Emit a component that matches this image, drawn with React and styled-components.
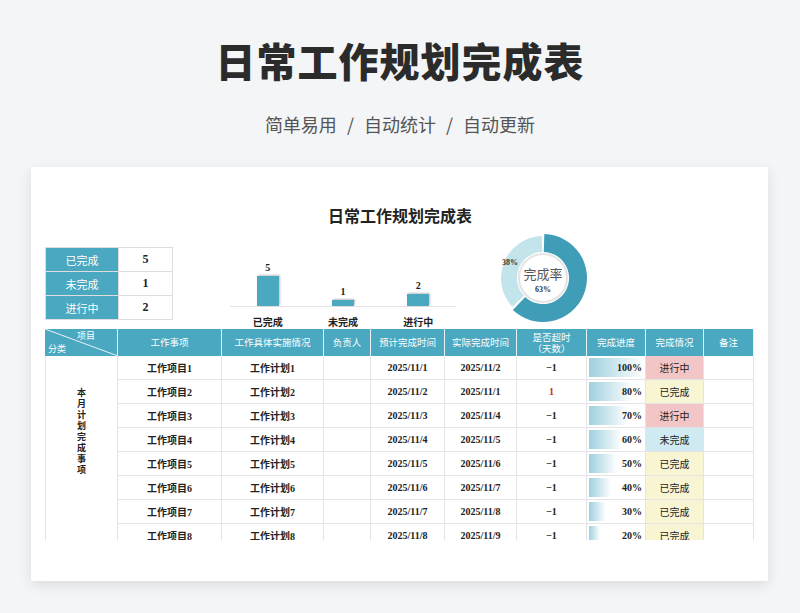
import React from 'react';
import styled, { createGlobalStyle } from 'styled-components';

const TEAL = '#4aa8c0';

const Global = createGlobalStyle`
  html, body { margin: 0; padding: 0; background: #f3f5f7; }
  body { font-family: "Noto Sans CJK SC", "Noto Sans", sans-serif; }
`;

const Page = styled.div`
  width: 800px;
  height: 613px;
  overflow: hidden;
  display: flex;
  flex-direction: column;
  align-items: center;
`;

const Heading = styled.h1`
  margin: 32px 0 0;
  font-size: 40px;
  line-height: 56px;
  font-weight: 900;
  color: #2b2b2b;
  letter-spacing: 1px;
`;

const Sub = styled.div`
  margin-top: 23px;
  font-size: 18px;
  color: #555;
  word-spacing: 6px;
`;

const Card = styled.div`
  margin-top: 30px;
  width: 737px;
  height: 414px;
  margin-left: -1px;
  background: #fff;
  box-shadow: 0 4px 12px rgba(0,0,0,0.1);
  padding: 0 13px 0 14px;
  box-sizing: border-box;
  font-family: "Liberation Serif", "Noto Sans CJK SC", serif;
  color: #222;
`;

const SheetTitle = styled.div`
  text-align: center;
  font-family: "Noto Sans CJK SC", sans-serif;
  font-size: 16px;
  font-weight: 700;
  margin-top: 36px;
  height: 22px;
`;

const Top = styled.div`
  display: flex;
  align-items: flex-start;
  margin-top: 22px;
  height: 82px;
`;

const Summary = styled.div`
  display: grid;
  grid-template-columns: 72px 53px;
  gap: 1px;
  background: #ddd;
  padding: 1px;
  align-self: flex-start;
`;

const SumLabel = styled.div`
  background: ${TEAL};
  color: #fff;
  font-family: "Noto Sans CJK SC", sans-serif;
  font-size: 11px;
  height: 23px;
  display: flex; align-items: center; justify-content: center;
`;

const SumVal = styled.div`
  background: #fff;
  font-size: 12px;
  font-weight: 700;
  display: flex; align-items: center; justify-content: center;
`;

const Chart = styled.div`
  margin-left: 57px;
  width: 226px;
  height: 82px;
  display: grid;
  grid-template-columns: repeat(3, 1fr);
  grid-template-rows: 60px 22px;
`;

const BarCol = styled.div`
  display: flex;
  flex-direction: column;
  align-items: center;
  justify-content: flex-end;
  border-bottom: 1px solid #e3e3e3;
  font-size: 10px;
  font-weight: 700;
`;

const Bar = styled.div`
  width: 22px;
  height: ${p => p.h}px;
  background: ${TEAL};
  margin-top: 3px;
  box-shadow: 1px -1px 2px rgba(0,0,0,0.25);
`;

const BarLabel = styled.div`
  text-align: center;
  font-family: "Noto Sans CJK SC", sans-serif;
  font-size: 10px;
  font-weight: 700;
  padding-top: 7px;
`;

const Donut = styled.div`
  margin-left: 42px;
  margin-top: -14px;
  width: 90px;
  height: 90px;
`;

const Table = styled.div`
  height: 211px;
  overflow: hidden;
  display: grid;
  grid-template-columns: 73px 104px 102px 47px 74px 72px 70px 59px 58px 50px;
  grid-template-rows: 27px;
  grid-auto-rows: 24px;
  font-size: 10px;
  font-weight: 700;
`;

const Th = styled.div`
  background: ${TEAL};
  color: #fff;
  border-right: 1px solid #e8f3f6;
  display: flex; flex-direction: column; align-items: center; justify-content: center;
  font-weight: 400;
  font-size: 9.5px;
  line-height: 11px;
  font-family: "Noto Sans CJK SC", sans-serif;
  position: relative;
  overflow: hidden;
`;

const Corner = styled(Th)`
  display: block;
  & span { position: absolute; font-size: 9px; }
`;

const Td = styled.div`
  border-right: 1px solid #e4e4e4;
  border-bottom: 1px solid #e4e4e4;
  display: flex; align-items: center; justify-content: center;
  color: ${p => (p.red ? '#d22' : '#222')};
  background: ${p => p.bg || '#fff'};
  position: relative;
`;

const Category = styled(Td)`
  grid-row: span 8;
  border-left: 1px solid #e4e4e4;
  writing-mode: vertical-rl;
  font-family: "Noto Sans CJK SC", sans-serif;
  font-size: 9px;
  letter-spacing: 2px;
  padding-bottom: 40px;
`;

const Progress = styled(Td)`
  justify-content: flex-end;
  padding-right: 3px;
  & > span { position: relative; }
`;

const Fill = styled.div`
  position: absolute;
  left: 2px; top: 2px; bottom: 2px;
  background: linear-gradient(90deg, #9fd0df, #ffffff);
`;

const Status = styled(Td)`
  font-family: "Noto Sans CJK SC", sans-serif;
  font-weight: 400;
`;

const statusBg = { 进行中: '#f2c6c6', 已完成: '#f8f5d3', 未完成: '#cfeaf0' };

const rows = [
  ['2025/11/1', '2025/11/2', -1, 100, '进行中'],
  ['2025/11/2', '2025/11/1', 1, 80, '已完成'],
  ['2025/11/3', '2025/11/4', -1, 70, '进行中'],
  ['2025/11/4', '2025/11/5', -1, 60, '未完成'],
  ['2025/11/5', '2025/11/6', -1, 50, '已完成'],
  ['2025/11/6', '2025/11/7', -1, 40, '已完成'],
  ['2025/11/7', '2025/11/8', -1, 30, '已完成'],
  ['2025/11/8', '2025/11/9', -1, 20, '已完成'],
];

const arc = (cx, cy, r0, r1, a0, a1) => {
  const p = (r, a) => [cx + r * Math.sin(a), cy - r * Math.cos(a)];
  const large = a1 - a0 > Math.PI ? 1 : 0;
  const [x1, y1] = p(r1, a0), [x2, y2] = p(r1, a1), [x3, y3] = p(r0, a1), [x4, y4] = p(r0, a0);
  return `M${x1} ${y1}A${r1} ${r1} 0 ${large} 1 ${x2} ${y2}L${x3} ${y3}A${r0} ${r0} 0 ${large} 0 ${x4} ${y4}Z`;
};

const DonutChart = () => {
  const split = 0.625 * Math.PI * 2;
  return (
    <svg width="90" height="90" viewBox="0 0 90 90">
      <path d={arc(45, 45, 26, 44, 0.03, split - 0.03)} fill="#3f9db8" />
      <path d={arc(45, 45, 26, 42, split + 0.03, Math.PI * 2 - 0.03)} fill="#c3e4ea" />
      <circle cx="45" cy="45" r="24" fill="#fff" stroke="#e4e4e4" strokeWidth="2" />
      <text x="45" y="46" textAnchor="middle" fontSize="13" fill="#555" fontFamily="Noto Sans CJK SC">完成率</text>
      <text x="45" y="59" textAnchor="middle" fontSize="8" fontWeight="700" fill="#333">63%</text>
      <text x="12" y="32" textAnchor="middle" fontSize="8" fontWeight="700" fill="#333">38%</text>
    </svg>
  );
};

export default function App() {
  return (
    <Page>
      <Global />
      <Heading>日常工作规划完成表</Heading>
      <Sub>简单易用 / 自动统计 / 自动更新</Sub>
      <Card>
        <SheetTitle>日常工作规划完成表</SheetTitle>
        <Top>
          <Summary>
            <SumLabel>已完成</SumLabel><SumVal>5</SumVal>
            <SumLabel>未完成</SumLabel><SumVal>1</SumVal>
            <SumLabel>进行中</SumLabel><SumVal>2</SumVal>
          </Summary>
          <Chart>
            <BarCol>5<Bar h={30} /></BarCol>
            <BarCol>1<Bar h={6} /></BarCol>
            <BarCol>2<Bar h={12} /></BarCol>
            <BarLabel>已完成</BarLabel>
            <BarLabel>未完成</BarLabel>
            <BarLabel>进行中</BarLabel>
          </Chart>
          <Donut><DonutChart /></Donut>
        </Top>
        <Table>
          <Corner>
            <svg width="73" height="27" style={{ position: 'absolute', left: 0, top: 0 }}>
              <line x1="0" y1="0" x2="73" y2="27" stroke="#e8f3f6" strokeWidth="1" />
            </svg>
            <span style={{ left: 32, top: 1 }}>项目</span>
            <span style={{ left: 3, top: 14 }}>分类</span>
          </Corner>
          <Th>工作事项</Th>
          <Th>工作具体实施情况</Th>
          <Th>负责人</Th>
          <Th>预计完成时间</Th>
          <Th>实际完成时间</Th>
          <Th><span>是否超时</span><span>（天数）</span></Th>
          <Th>完成进度</Th>
          <Th>完成情况</Th>
          <Th>备注</Th>
          <Category>本月计划完成事项</Category>
          {rows.map(([plan, act, over, pct, st], i) => (
            <React.Fragment key={i}>
              <Td>工作项目{i + 1}</Td>
              <Td>工作计划{i + 1}</Td>
              <Td />
              <Td>{plan}</Td>
              <Td>{act}</Td>
              <Td red={over > 0}>{over > 0 ? '1' : '−1'}</Td>
              <Progress>
                <Fill style={{ width: `${pct * 0.55}px` }} />
                <span>{pct}%</span>
              </Progress>
              <Status bg={statusBg[st]}>{st}</Status>
              <Td />
            </React.Fragment>
          ))}
        </Table>
      </Card>
    </Page>
  );
}
